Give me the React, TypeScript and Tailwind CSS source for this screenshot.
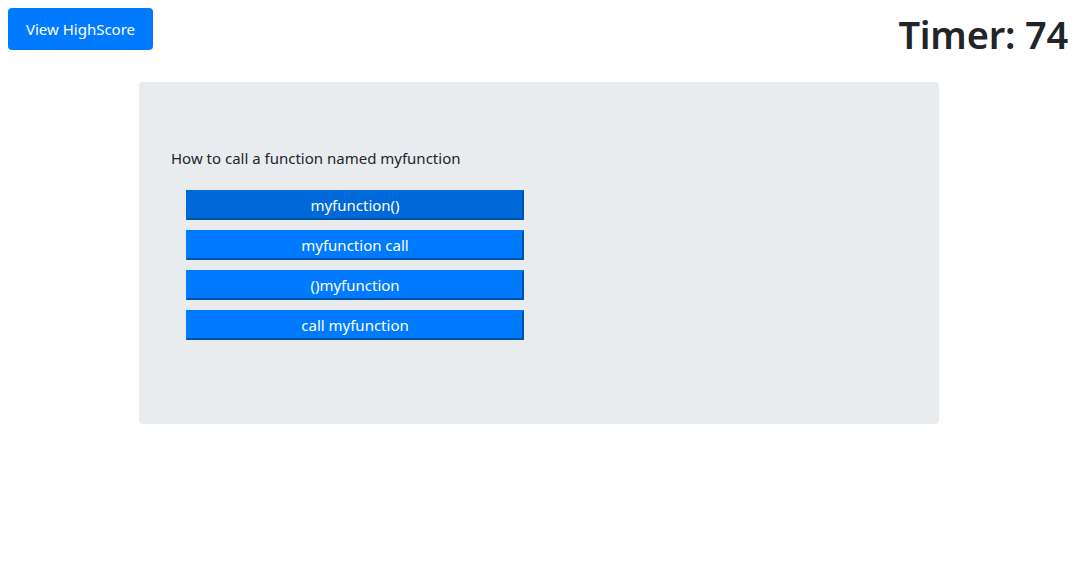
const choices = ['myfunction()', 'myfunction call', '()myfunction', 'call myfunction'];

export default function App() {
  return (
    <div className="min-h-screen bg-white text-[#212529]" style={{ fontFamily: '"Noto Sans", "Open Sans", sans-serif' }}>
      <div className="flex items-start justify-between px-2 pt-2">
        <button className="h-[42px] w-[145px] rounded bg-[#007bff] text-[15px] text-white">View HighScore</button>
        <h1 className="mt-[4px] text-[38px] font-semibold leading-[1.2] tracking-[-0.2px]">Timer: 74</h1>
      </div>

      <div className="ml-[139px] mt-[24px] h-[342px] w-[800px] rounded bg-[#e9ecef] px-8 pt-[64px]">
        <p className="text-[15px] leading-[24px]">How to call a function named myfunction</p>
        <div className="mt-[20px] flex flex-col gap-[10px] pl-[15px]">
          {choices.map((c, i) => (
            <button
              key={c}
              className={`h-[30px] w-[338px] border-2 border-b-[#0052a8] border-r-[#0052a8] pt-[1px] text-[15px] text-white ${
                i === 0 ? 'border-l-[#0069d9] border-t-[#0069d9] bg-[#0069d9]' : 'border-l-[#007bff] border-t-[#007bff] bg-[#007bff]'
              }`}
            >
              {c}
            </button>
          ))}
        </div>
      </div>
    </div>
  );
}
